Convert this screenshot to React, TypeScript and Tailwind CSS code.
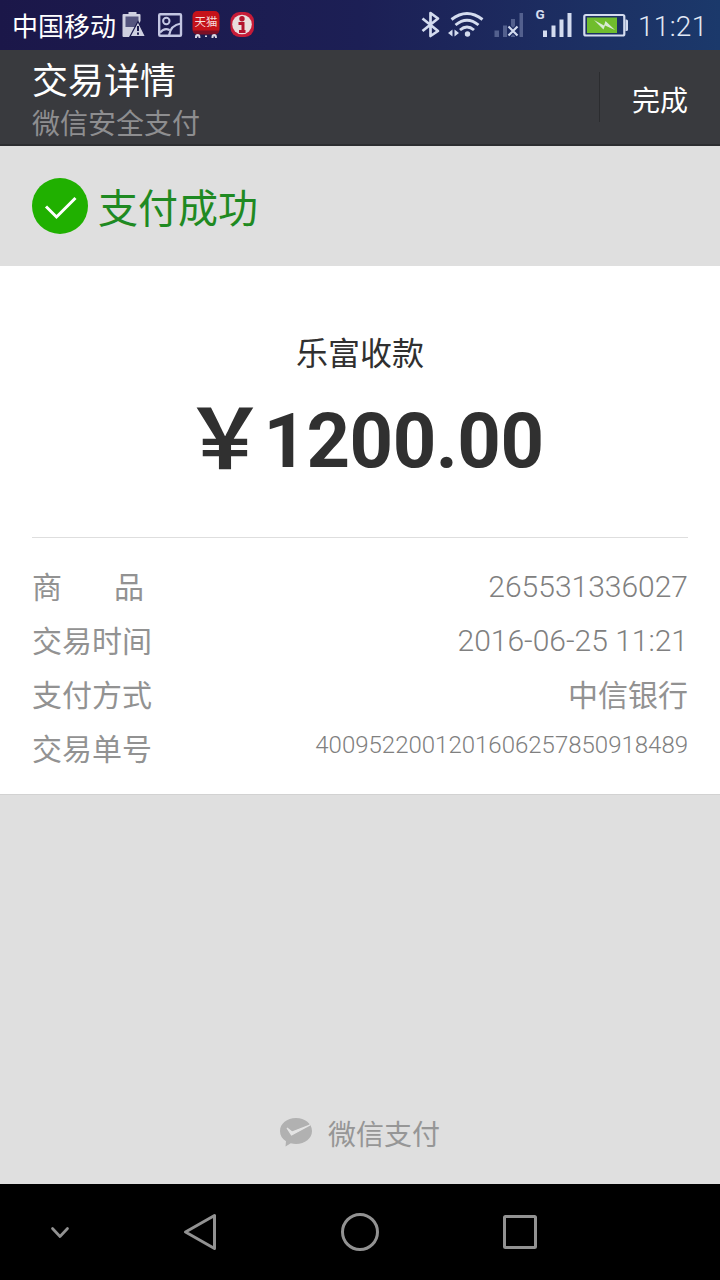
import type { ReactNode } from "react";

const CJK = "font-['Roboto','Noto_Sans_CJK_SC',sans-serif]";

function StatusGlyph({ box, className, children }: { box: string; className: string; children: ReactNode }) {
  return (
    <svg viewBox={box} className={`h-[50px] shrink-0 ${className}`} fill="none">
      {children}
    </svg>
  );
}

function StatusBar() {
  return (
    <header className="flex h-[50px] items-center justify-between bg-linear-to-r from-[#1b1749] via-[#1c1f55] via-50% to-[#1b396b] pr-3 pl-3">
      <div className="flex items-center">
        <span className="w-[104px] pt-1 text-[26px] leading-[46px] whitespace-nowrap text-white">中国移动</span>
        <StatusGlyph box="116 0 36 50" className="w-9">
          <path d="M128.500 12h8v2h3q1 0 1 1v6l-9 16h-8q-1 0-1-1V15q0-1 1-1h5z" fill="#cfd0e0" />
          <path d="M125.500 16.500h13v5l-3 5.500h-10z" fill="#55557f" />
          <path d="M138 21.500 130 36.500h15.500z" fill="#cfd0e0" stroke="#1b1a4c" strokeWidth="1.200" />
          <path d="M138 26v5M138 32.500v2.200" stroke="#1b1a4c" strokeWidth="2" />
        </StatusGlyph>
        <StatusGlyph box="152 0 36 50" className="w-9">
          <g stroke="#c3c6e2" strokeWidth="2.400">
            <rect x="159.200" y="14.200" width="21.800" height="21.600" rx="1" />
            <circle cx="166.300" cy="21" r="3.200" strokeWidth="2" />
            <path d="M160 32.500C163 29 166 28 169.500 30M169 35.500C170 28.500 174 24.500 181 23.500" strokeWidth="2.200" />
          </g>
        </StatusGlyph>
        <StatusGlyph box="188 0 36 50" className="w-9">
          <rect x="192.500" y="11" width="27" height="23" rx="5" fill="#c5121a" />
          <text x="206" y="25.500" textAnchor="middle" fontSize="11.500" fill="#f6dcdc" className={CJK}>天猫</text>
          <path d="M192.500 30.500h27q-1 4-5 4h-17q-4 0-5-4z" fill="#7c1025" />
          <g fill="#d9d8e3">
            <path d="M195 38v-1a2.700 3 0 0 1 5.400 0v1zM211.500 38v-1a2.700 3 0 0 1 5.400 0v1z" />
            <rect x="205" y="35.500" width="2" height="1.500" />
          </g>
          <path d="M197 38v-1.500h1.500V38zM213.500 38v-1.500h1.500V38z" fill="#1c1b50" />
        </StatusGlyph>
        <StatusGlyph box="224 0 36 50" className="w-9">
          <rect x="230.500" y="12" width="23.500" height="25" rx="9" fill="#c61b38" />
          <circle cx="242" cy="24.500" r="9.800" fill="#e9dede" />
          <circle cx="242" cy="18.800" r="2.700" fill="#b3122d" />
          <path d="M238.500 23.500h4.500v8M239 31.500h6.500" stroke="#b3122d" strokeWidth="3" />
        </StatusGlyph>
      </div>
      <div className="flex items-center">
        <StatusGlyph box="418 0 26 50" className="w-[26px]">
          <path d="m422.500 18.500 15.500 12.500-7.500 5V13l7.500 5.500-15.500 12.500" stroke="#d4dcef" strokeWidth="2.700" strokeLinejoin="round" />
        </StatusGlyph>
        <StatusGlyph box="444 0 44 50" className="w-11">
          <g stroke="#d4dcef" strokeWidth="2.900">
            <path d="M451.500 19.500Q467 7.500 482.500 19.500" />
            <path d="M455.500 25Q467 15.500 478.500 25" />
            <path d="M460 30Q467 24 474 30" />
          </g>
          <circle cx="467.500" cy="34" r="2.700" fill="#d4dcef" />
          <path d="M452.500 29.500v7l-4.500-3.500zM454.500 29.500v7l4.500-3.500z" fill="#d4dcef" />
        </StatusGlyph>
        <StatusGlyph box="488 0 42 50" className="w-[42px]">
          <path d="M494.500 30.500h4.500V37h-4.500zM503 25.500h4V37h-4zM511 19h4v18h-4zM519.500 13h3.500v24h-3.500z" fill="#53608e" />
          <path d="m508.500 26.500 9 9m0-9-9 9" stroke="#1b2a60" strokeWidth="4.500" />
          <path d="m508.500 26.500 9 9m0-9-9 9" stroke="#d4dcef" strokeWidth="2.200" />
        </StatusGlyph>
        <StatusGlyph box="530 0 48 50" className="w-12">
          <text x="535.500" y="18.500" fontSize="13.500" fontWeight="700" fill="#d4dcef" className={CJK}>G</text>
          <path d="M543 30.500h4V37h-4zM551.500 25.500h4V37h-4zM559.500 19.500h4V37h-4zM567.500 13h4v24h-4z" fill="#d4dcef" />
        </StatusGlyph>
        <StatusGlyph box="578 0 60 50" className="w-[60px]">
          <rect x="584.300" y="15" width="40" height="20.500" rx="1.500" stroke="#d4dcef" strokeWidth="2.200" />
          <path d="M625.500 19.500h1q1.500 0 1.500 1.500v8.500q0 1.500-1.500 1.500h-1z" fill="#d4dcef" />
          <rect x="587" y="17.500" width="30" height="15.500" fill="#70bd2d" />
          <path d="m594 20 10 5.500 1.500-4.500 9.500 9-10-4.500-1.500 4z" fill="#d9ead5" />
        </StatusGlyph>
        <time className="w-[70px] pt-1 text-[28px] leading-[48px] font-light tracking-[0.3px] whitespace-nowrap text-[#e2e8f5]">11:21</time>
      </div>
    </header>
  );
}

function TitleBar() {
  return (
    <div className="flex h-24 items-center justify-between border-b-2 border-[#2c2d30] bg-[#393a3e] pl-8">
      <div className="flex flex-col pt-[9px] whitespace-nowrap">
        <h1 className="text-[36px] leading-[46px] text-white">交易详情</h1>
        <p className="text-[28px] leading-[40px] text-[#8e8e90]">微信安全支付</p>
      </div>
      <div className="flex h-[50px] items-center border-l border-[#2b2c2f] pr-8 pl-8">
        <button className="pt-2.5 text-[28px] leading-[40px] text-white">完成</button>
      </div>
    </div>
  );
}

const rows = [
  { label: "交易时间", value: "2016-06-25 11:21" },
  { label: "支付方式", value: "中信银行" },
];

export default function App() {
  return (
    <div className={`flex h-[1280px] w-[720px] flex-col overflow-hidden bg-[#dfdfdf] ${CJK}`}>
      <StatusBar />
      <TitleBar />
      <section className="flex h-[120px] items-center gap-2.5 pl-8 text-[#1f8a22]">
        <svg viewBox="0 0 56 56" className="size-14" fill="none">
          <circle cx="28" cy="28" r="28" fill="#20b000" />
          <path d="m14 28.500 10.500 10.500L43.500 20" stroke="#fff" strokeWidth="3" />
        </svg>
        <h2 className="pt-2 text-[40px] leading-[56px]">支付成功</h2>
      </section>
      <main className="h-[529px] border-b border-[#d2d2d2] bg-white px-8">
        <div className="flex h-[271px] flex-col items-center pt-16 text-[#303030]">
          <p className="text-[32px] leading-[48px]">乐富收款</p>
          <p className="flex pt-[13px] pl-1 text-[76px] leading-[100px] font-bold whitespace-nowrap">
            <span className="flex w-[83px] justify-center pl-[6px] text-[83px]">￥</span>
            <span className="tracking-[-0.5px]">1200.00</span>
          </p>
        </div>
        <dl className="border-t border-[#dedede] pt-[22px] text-[30px] leading-[54px] text-[#929292]">
          <div className="flex h-[54px] justify-between">
            <dt className="flex w-[112px] justify-between leading-[56px]">
              <span>商</span>
              <span>品</span>
            </dt>
            <dd className="font-light text-[#808080]">265531336027</dd>
          </div>
          {rows.map((row) => (
            <div key={row.label} className="flex h-[54px] justify-between">
              <dt className="leading-[56px]">{row.label}</dt>
              {/^\d/.test(row.value) ? (
                <dd className="font-light text-[#808080]">{row.value}</dd>
              ) : (
                <dd className="leading-[56px]">{row.value}</dd>
              )}
            </div>
          ))}
          <div className="flex h-[54px] justify-between">
            <dt className="leading-[56px]">交易单号</dt>
            <dd className="text-[24px] leading-[46px] font-light text-[#808080]">4009522001201606257850918489</dd>
          </div>
        </dl>
      </main>
      <footer className="flex flex-1 items-end justify-center gap-4 pb-7 text-[#969696]">
        <svg viewBox="0 0 32 30" className="mb-2 h-[30px] w-8">
          <path d="M16 0C7 0 0 5.600 0 13c0 4.500 2.300 7.800 6 10.300L5.500 28.500l5.300-3.200c1.700.5 3.400.7 5.200.7 9 0 16-5.600 16-13S25 0 16 0z" fill="#b1b1b1" />
          <path d="M7 10 11.500 17 30 7 12 14z" fill="#e4e4e4" stroke="#e4e4e4" strokeWidth="1.200" />
        </svg>
        <span className="text-[28px] leading-[40px]">微信支付</span>
      </footer>
      <nav className="flex h-24 items-center bg-black pl-10">
        <svg viewBox="40 1184 520 96" className="h-24 w-[520px]" fill="none" stroke="#929292" strokeWidth="3" strokeLinejoin="round" strokeLinecap="round">
          <path d="m52.500 1228.500 7.500 8 7.500-8" strokeWidth="2.700" />
          <path d="M214.500 1215.500v33L185.500 1232z" />
          <circle cx="360" cy="1232" r="17.500" />
          <rect x="504.500" y="1216.500" width="31" height="31" rx="1" />
        </svg>
      </nav>
    </div>
  );
}
